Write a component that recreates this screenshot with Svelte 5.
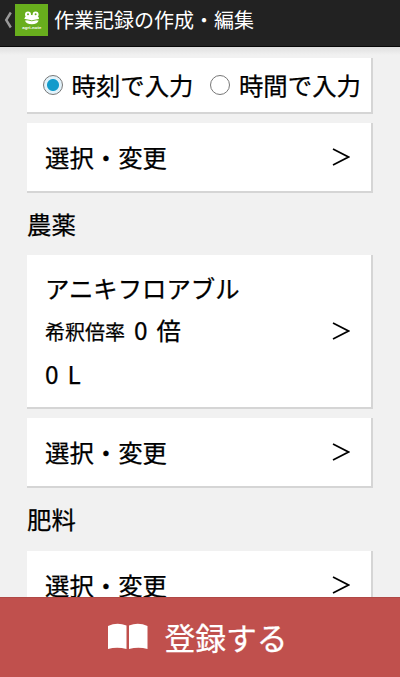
<script>
  let inputMode = $state("clock");

  const modes = [
    { value: "clock", label: "時刻で入力" },
    { value: "duration", label: "時間で入力" },
  ];

  const pesticide = { name: "アニキフロアブル", dilution: 0, amount: 0 };
</script>

{#snippet arrow()}
  <svg class="arrow" viewBox="0 0 18 18" aria-hidden="true">
    <path d="M1 1 16.5 9 1 17" />
  </svg>
{/snippet}

{#snippet selectRow()}
  <button type="button" class="card select">
    <span>選択・変更</span>
    {@render arrow()}
  </button>
{/snippet}

<div class="screen">
  <header class="header">
    <svg class="back" viewBox="0 0 8 18" aria-hidden="true">
      <path d="M6.8 1.5 2.2 9l4.6 7.5" />
    </svg>
    <div class="logo">
      <svg viewBox="0 0 33 32" aria-hidden="true">
        <circle cx="13" cy="10.5" r="3" />
        <circle cx="20.600" cy="10.500" r="3" />
        <ellipse cx="16.8" cy="14.3" rx="7.2" ry="3.300" />
        <path d="M10 16.500h13.600c-.4 2.400-3 3.800-6.800 3.800s-6.400-1.400-6.800-3.800z" />
        <path class="mouth" d="M9.500 15.300q7.300 3 14.600 0" />
        <circle class="eye" cx="13" cy="10.300" r="1" />
        <circle class="eye" cx="20.600" cy="10.300" r="1" />
        <text x="16.800" y="24.800" textLength="19">agri-note</text>
      </svg>
    </div>
    <h1>作業記録の作成・編集</h1>
  </header>

  <main class="content">
    <div class="card modes">
      {#each modes as mode}
        <label class="mode">
          <input type="radio" name="mode" value={mode.value} bind:group={inputMode} />
          <span>{mode.label}</span>
        </label>
      {/each}
    </div>

    {@render selectRow()}

    <h2>農薬</h2>
    <div class="card item">
      <div class="details">
        <div>{pesticide.name}</div>
        <div class="dilution">
          <span class="small">希釈倍率</span>
          <span class="num">{pesticide.dilution}</span>
          <span>倍</span>
        </div>
        <div class="amount">
          <span class="num">{pesticide.amount}</span>
          <span class="num">L</span>
        </div>
      </div>
      {@render arrow()}
    </div>

    {@render selectRow()}

    <h2>肥料</h2>
    {@render selectRow()}
  </main>

  <button type="button" class="submit">
    <svg class="book" viewBox="0 0 40 28" aria-hidden="true">
      <path d="M0 3Q9-1 18.5 2.5V26Q9 23.5 0 26z" />
      <path d="M21 2.5Q30.5-1 39.5 3V26Q30.5 23.5 21 26z" />
    </svg>
    <span>登録する</span>
  </button>
</div>

<style>
  :global(body) {
    background: #f1f1f1;
  }

  .screen {
    display: flex;
    flex-direction: column;
    width: 400px;
    height: 677px;
    overflow: hidden;
    background: #f1f1f1;
    color: #000;
    font-family: "Noto Sans CJK JP", sans-serif;
    font-size: 24.4px;
    line-height: 36px;
    -webkit-text-stroke: 0.25px;
  }

  .header {
    display: flex;
    align-items: center;
    flex: none;
    box-sizing: border-box;
    height: 47px;
    padding: 0 0 6px 4px;
    background: #222;
    border-bottom: 1px solid #080808;
    color: #fff;
    -webkit-text-stroke: 0;
  }

  .back {
    width: 8px;
    height: 18px;
    fill: none;
    stroke: #999;
    stroke-width: 2.4;
  }

  .logo {
    width: 33px;
    height: 32px;
    margin-left: 3px;
    background: #68ae1d;
  }

  .logo svg {
    display: block;
    width: 33px;
    height: 32px;
    fill: #fff;
  }

  .logo .mouth {
    fill: none;
    stroke: #68ae1d;
    stroke-width: 0.9;
  }

  .logo .eye {
    fill: #68ae1d;
  }

  .logo text {
    font: bold 4.3px "Liberation Sans", sans-serif;
    text-anchor: middle;
  }

  h1 {
    margin: 0 0 0 6px;
    font-size: 20px;
    font-weight: 400;
    line-height: 30px;
  }

  .content {
    flex: 1;
    min-height: 0;
    overflow: hidden;
    padding: 11px 27px 0;
    background: linear-gradient(#dfdfdf, #f1f1f1 8px);
  }

  .card {
    display: flex;
    align-items: center;
    box-sizing: border-box;
    width: 346px;
    border: solid #d5d5d5;
    border-width: 0 2px 2px 0;
    background: #fff;
  }

  .modes {
    height: 56px;
    margin-bottom: 9px;
    padding-left: 16px;
    gap: 17px;
  }

  .mode {
    display: flex;
    align-items: center;
    gap: 8.5px;
  }

  .mode input {
    appearance: none;
    flex: none;
    width: 20px;
    height: 20px;
    margin: 0;
    border: 1px solid #777;
    border-radius: 50%;
    background: #fff;
  }

  .mode input:checked {
    background: radial-gradient(circle, #129bcb 5.5px, #e2f2fa 6.5px);
  }

  .select {
    height: 70px;
    padding: 0 21px 0 18px;
    color: inherit;
    font: inherit;
    justify-content: space-between;
  }

  .arrow {
    flex: none;
    width: 18px;
    height: 18px;
    fill: none;
    stroke: #000;
    stroke-width: 1.7;
  }

  h2 {
    margin: 0;
    padding: 13px 0 13.4px;
    font-size: inherit;
    font-weight: 400;
    line-height: 36px;
  }

  .item {
    justify-content: space-between;
    height: 154px;
    margin-bottom: 9px;
    padding: 0 21px 0 18px;
  }

  .details {
    display: flex;
    flex-direction: column;
    gap: 6px;
  }

  .dilution,
  .amount {
    display: flex;
    align-items: baseline;
  }

  .small {
    margin-right: 9px;
    font-size: 20px;
  }

  .num {
    margin-right: 9px;
  }

  .submit {
    display: flex;
    align-items: center;
    justify-content: center;
    flex: none;
    box-sizing: border-box;
    width: 400px;
    height: 80px;
    padding: 0 4px 2px 0;
    border: 0;
    border-top: 1px solid #b04946;
    background: #c0504d;
    color: #fff;
    font: inherit;
    font-size: 30.8px;
    gap: 16px;
  }

  .book {
    width: 40px;
    height: 28px;
    fill: #fff;
  }
</style>
